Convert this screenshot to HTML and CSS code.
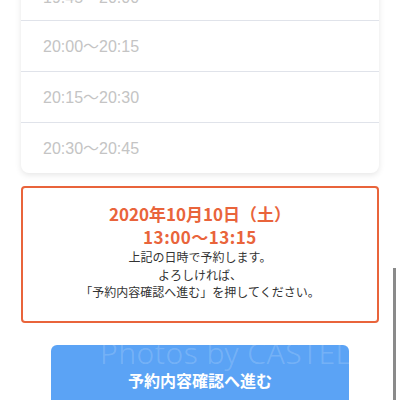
FILE: index.html
```html
<!doctype html>
<html>
<head>
<meta charset="utf-8">
<title>予約</title>
<link rel="stylesheet" href="styles.css">
</head>
<body>
<div class="page">
	<ul class="slots">
		<li>19:45〜20:00</li>
		<li>20:00〜20:15</li>
		<li>20:15〜20:30</li>
		<li>20:30〜20:45</li>
	</ul>
	<div class="confirm">
		<p class="date">2020年10月10日（土）</p>
		<p class="time">13:00〜13:15</p>
		<p class="note">上記の日時で予約します。</p>
		<p class="note">よろしければ、</p>
		<p class="note">「予約内容確認へ進む」を押してください。</p>
	</div>
	<div class="btn-wrap">
		<a class="btn" href="#">予約内容確認へ進む</a>
	</div>
</div>
<div class="mark">Photos by CASTEL</div>
<div class="scroll"></div>
</body>
</html>
```

FILE: styles.css
```css
*{padding:0; margin:0;}
body{background:#fff; font-family:"Noto Sans CJK JP", sans-serif; overflow:hidden; height:400px;}
li{list-style:none;}
a{text-decoration:none;}
.page{padding:0 21px;}
.slots{margin-top:-30px; background:#fff; border-radius:8px; box-shadow:0 2px 6px rgba(0,0,0,.1);}
.slots li{height:49px; padding-top:1px; line-height:50px; padding-left:22px; font-family:"Liberation Sans","Noto Sans CJK JP",sans-serif; font-size:16px; color:#c4c4c4; border-bottom:1px solid #e0e3ea;}
.slots li:first-child{padding-top:3px; height:47px;}
.slots li:last-child{border-bottom:none;}
.confirm{margin-top:13px; border:2.5px solid #e9643b; border-radius:4px; padding:14px 0 20px; text-align:center;}
.date,.time{color:#e9643b; font-weight:bold; font-size:17px; line-height:23px;}
.time{letter-spacing:0.5px;}
.note{color:#333; font-size:12px; line-height:17.5px;}
.btn-wrap{padding:22px 30px 0;}
.btn{display:block; height:70px; line-height:70px; background:#5ba3f5; border-radius:6px; color:#fff; font-weight:bold; font-size:16px; text-align:center;}
.mark{position:absolute; left:100px; top:336px; font-family:"Noto Sans", sans-serif; font-weight:300; font-size:30px; line-height:34px; letter-spacing:0.5px; color:rgba(255,255,255,.18); white-space:nowrap;}
.scroll{position:absolute; right:4px; top:268px; width:3px; height:140px; background:#8a8a8a;}
```
